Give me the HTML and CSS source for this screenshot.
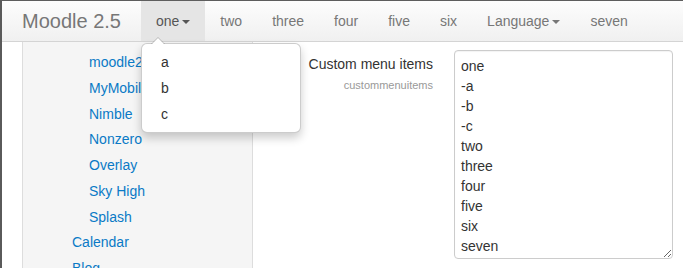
FILE: index.html
```html
<!DOCTYPE html>
<html lang="en">
	<head>
		<meta charset="UTF-8" />
		<meta name="viewport" content="width=device-width, initial-scale=1.0" />
		<title>Moodle 2.5 - Custom menu items</title>
		<link rel="stylesheet" href="styles.css">
	</head>

	<body>
		<div class="navbar">
			<a class="brand" href="#">Moodle 2.5</a>
			<ul class="nav">
				<li class="dropdown open">
					<a href="#" class="active">one<b class="caret"></b></a>
					<ul class="dropdown-menu">
						<li><a href="#">a</a></li>
						<li><a href="#">b</a></li>
						<li><a href="#">c</a></li>
					</ul>
				</li>
				<li><a href="#">two</a></li>
				<li><a href="#">three</a></li>
				<li><a href="#">four</a></li>
				<li><a href="#">five</a></li>
				<li><a href="#">six</a></li>
				<li><a href="#">Language<b class="caret"></b></a></li>
				<li><a href="#">seven</a></li>
			</ul>
		</div>

		<div class="page">
			<div class="sidebar">
				<ul class="tree">
					<li class="sub"><a href="#">moodle2012</a></li>
					<li class="sub"><a href="#">MyMobile</a></li>
					<li class="sub"><a href="#">Nimble</a></li>
					<li class="sub"><a href="#">Nonzero</a></li>
					<li class="sub"><a href="#">Overlay</a></li>
					<li class="sub"><a href="#">Sky High</a></li>
					<li class="sub"><a href="#">Splash</a></li>
					<li><a href="#">Calendar</a></li>
					<li><a href="#">Blog</a></li>
				</ul>
			</div>

			<div class="content">
				<div class="form-item">
					<div class="form-label">
						<label for="custommenuitems">Custom menu items</label>
						<span class="form-shortname">custommenuitems</span>
					</div>
					<!-- textarea keeps the raw menu definition -->
					<textarea id="custommenuitems" spellcheck="false">one
-a
-b
-c
two
three
four
five
six
seven</textarea>
				</div>
			</div>
		</div>
	</body>
</html>
```

FILE: styles.css
```css
html,
body {
	height: 100%;
}

body {
	margin: 0;
	font-family: "Liberation Sans", Arial, sans-serif;
	font-size: 14px;
	line-height: 20px;
	color: #333;
	background: #fff;
	border-top: 1px solid #5e5e5e;
	border-left: 2px solid #5a5a5a;
	box-sizing: border-box;
	overflow: hidden;
}

a {
	text-decoration: none;
}

ul {
	list-style: none;
	margin: 0;
	padding: 0;
}

.navbar {
	display: flex;
	align-items: stretch;
	height: 40px;
	padding-left: 20px;
	background: linear-gradient(#fdfdfd, #f0f0f0);
	border-bottom: 1px solid #d4d4d4;
	position: relative;
	z-index: 2;
}

.brand {
	font-size: 20px;
	line-height: 40px;
	color: #777;
	padding-right: 20px;
}

.nav {
	display: flex;
}

.nav > li {
	position: relative;
}

.nav > li > a {
	display: block;
	padding: 10px 15px;
	color: #777;
}

.nav > li > a.active {
	background: #e5e5e5;
	color: #555;
}

.caret {
	display: inline-block;
	width: 0;
	height: 0;
	margin-left: 3px;
	vertical-align: middle;
	border-top: 4px solid #777;
	border-left: 4px solid transparent;
	border-right: 4px solid transparent;
}

.nav > li > a.active .caret {
	border-top-color: #555;
}

/* open dropdown under "one" */
.dropdown-menu {
	position: absolute;
	top: 42px;
	left: 0;
	width: 158px;
	padding: 5px 0;
	background: #fff;
	border: 1px solid rgba(0, 0, 0, 0.2);
	border-radius: 6px;
	box-shadow: 0 5px 10px rgba(0, 0, 0, 0.2);
}

.dropdown-menu:before {
	content: "";
	position: absolute;
	top: -7px;
	left: 9px;
	border-left: 7px solid transparent;
	border-right: 7px solid transparent;
	border-bottom: 7px solid rgba(0, 0, 0, 0.2);
}

.dropdown-menu:after {
	content: "";
	position: absolute;
	top: -6px;
	left: 10px;
	border-left: 6px solid transparent;
	border-right: 6px solid transparent;
	border-bottom: 6px solid #fff;
}

.dropdown-menu a {
	display: block;
	padding: 3px 19px;
	color: #333;
}

.page {
	display: flex;
	height: calc(100% - 41px);
	padding-left: 20px;
}

.sidebar {
	width: 229px;
	flex-shrink: 0;
	background: #f5f5f5;
	border-left: 1px solid #ddd;
	border-right: 1px solid #ddd;
	padding-top: 8px;
}

.tree li {
	line-height: 25.75px;
	padding-left: 49px;
	white-space: nowrap;
}

.tree li.sub {
	padding-left: 66px;
}

.tree a {
	color: #0a7ac6;
}

.content {
	flex: 1;
	padding: 8px 10px 0 0;
}

.form-item {
	display: flex;
	gap: 20px;
}

.form-label {
	flex: 1;
	display: flex;
	flex-direction: column;
	align-items: flex-end;
	padding-top: 4px;
	padding-right: 1px;
}

.form-label label {
	color: #333;
}

.form-shortname {
	font-size: 11px;
	color: #999;
	margin-top: 1px;
}

textarea {
	width: 219px;
	height: 209px;
	box-sizing: border-box;
	margin: 0;
	padding: 5px 6px 2px;
	font-family: "Liberation Sans", Arial, sans-serif;
	font-size: 14px;
	line-height: 20px;
	color: #333;
	border: 1px solid #ccc;
	border-radius: 4px;
	overflow: hidden;
	resize: both;
	box-shadow: inset 0 1px 1px rgba(0, 0, 0, 0.05);
}
```
